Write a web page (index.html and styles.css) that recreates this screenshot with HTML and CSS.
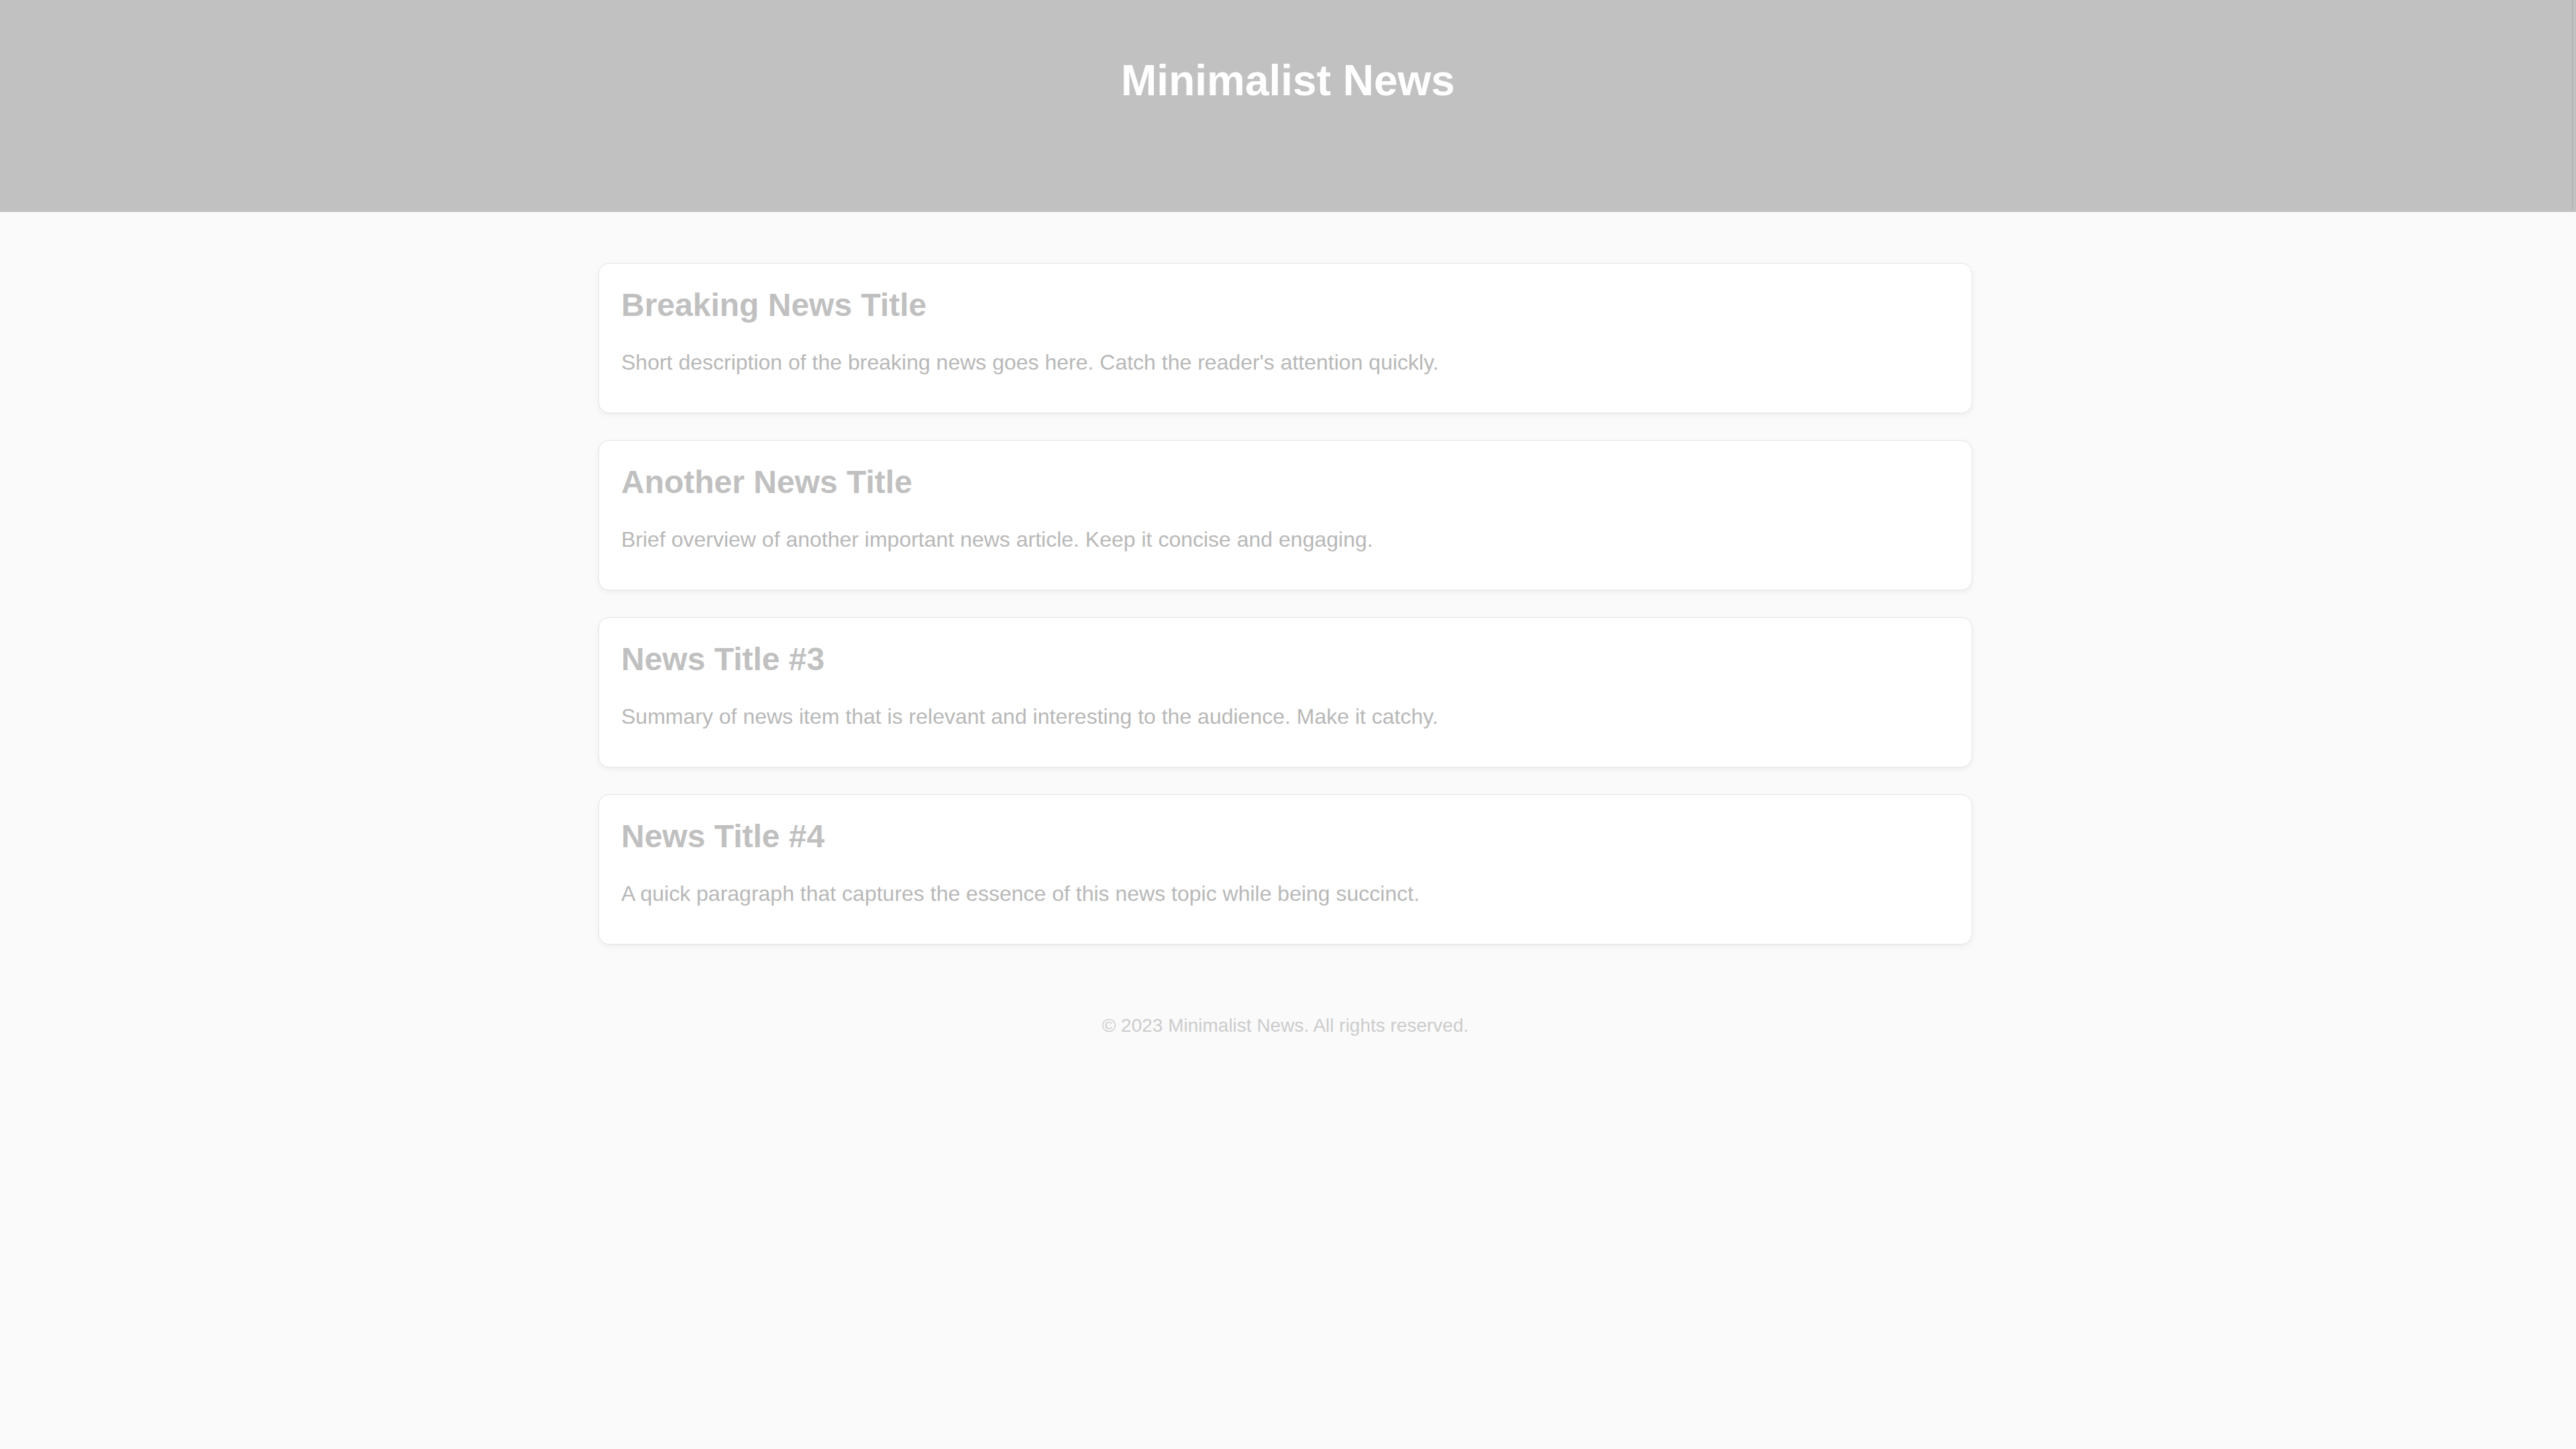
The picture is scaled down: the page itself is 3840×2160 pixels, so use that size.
FILE: index.html
```html
<!DOCTYPE html>
<html lang="en">
<head>
<meta charset="utf-8">
<title>Minimalist News</title>
<link rel="stylesheet" href="styles.css">
</head>
<body>
<header class="site-header">
  <h1 class="site-title">Minimalist News</h1>
</header>
<main class="main">
  <div class="container">
    <article class="card">
      <h2 class="card-title">Breaking News Title</h2>
      <p class="card-text">Short description of the breaking news goes here. Catch the reader's attention quickly.</p>
    </article>
    <article class="card">
      <h2 class="card-title">Another News Title</h2>
      <p class="card-text">Brief overview of another important news article. Keep it concise and engaging.</p>
    </article>
    <article class="card">
      <h2 class="card-title">News Title #3</h2>
      <p class="card-text">Summary of news item that is relevant and interesting to the audience. Make it catchy.</p>
    </article>
    <article class="card">
      <h2 class="card-title">News Title #4</h2>
      <p class="card-text">A quick paragraph that captures the essence of this news topic while being succinct.</p>
    </article>
    <footer class="site-footer">© 2023 Minimalist News. All rights reserved.</footer>
  </div>
</main>
</body>
</html>
```

FILE: styles.css
```css
html, body {
  margin: 0;
  padding: 0;
}
body {
  background: #fafafa;
  font-family: "Liberation Sans", Arial, sans-serif;
  min-height: 2160px;
}
.site-header {
  position: relative;
  box-sizing: border-box;
  height: 316px;
  padding-top: 83px;
  background: #c1c1c1;
  text-align: center;
}
.site-header::after {
  content: "";
  position: absolute;
  right: 5px;
  top: 0;
  width: 1px;
  height: 312px;
  background: #a9a9a9;
}
.site-title {
  margin: 0;
  font-size: 64px;
  font-weight: 700;
  color: #ffffff;
  line-height: normal;
}
.main {
  padding: 76px 8px 0 0;
}
.container {
  max-width: 2048px;
  margin: 0 auto;
}
.card {
  box-sizing: border-box;
  background: #ffffff;
  border: 1px solid #e4e4e4;
  border-radius: 16px;
  box-shadow: 0 3px 8px rgba(0, 0, 0, 0.05);
  padding: 34px 32px 32px 33px;
  margin-bottom: 40px;
  height: 224px;
}
.card-title {
  margin: 0 0 40px;
  font-size: 48px;
  font-weight: 700;
  color: #c0c0c0;
  line-height: normal;
}
.card-text {
  margin: 0;
  font-size: 32px;
  color: #b8b8b8;
  line-height: normal;
}
.site-footer {
  margin-top: 105px;
  text-align: center;
  font-size: 28px;
  color: #cccccc;
  line-height: normal;
}
```
